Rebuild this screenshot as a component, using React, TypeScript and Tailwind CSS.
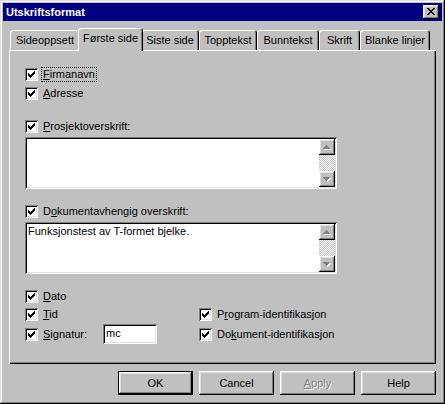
import React from 'react';

const raised =
  'shadow-[inset_-1px_-1px_0_#000,inset_1px_1px_0_#fff,inset_-2px_-2px_0_#808080,inset_2px_2px_0_#dfdfdf]';
const sunken =
  'shadow-[inset_1px_1px_0_#808080,inset_-1px_-1px_0_#fff,inset_2px_2px_0_#000,inset_-2px_-2px_0_#dfdfdf]';

const CheckMark = () => (
  <svg width="7" height="7" viewBox="0 0 7 7" shapeRendering="crispEdges">
    <path
      fill="#000"
      d="M6 0h1v1h-1z M5 1h2v1h-2z M0 2h1v1h-1z M4 2h3v1h-3z M0 3h2v1h-2z M3 3h3v1h-3z M0 4h5v1h-5z M1 5h3v1h-3z M2 6h1v1h-1z"
    />
  </svg>
);

const CloseGlyph = () => (
  <svg width="8" height="7" viewBox="0 0 8 7" shapeRendering="crispEdges">
    <path
      fill="#000"
      d="M0 0h2v1h-2z M6 0h2v1h-2z M1 1h2v1h-2z M5 1h2v1h-2z M2 2h4v1h-4z M3 3h2v1h-2z M2 4h4v1h-4z M1 5h2v1h-2z M5 5h2v1h-2z M0 6h2v1h-2z M6 6h2v1h-2z"
    />
  </svg>
);

// disabled arrow: grey triangle with a white copy one pixel down-right
const Arrow = ({ down }: { down?: boolean }) => {
  const d = down
    ? 'M4 6h7v1h-7z M5 7h5v1h-5z M6 8h3v1h-3z M7 9h1v1h-1z'
    : 'M7 6h1v1h-1z M6 7h3v1h-3z M5 8h5v1h-5z M4 9h7v1h-7z';
  return (
    <svg width="16" height="16" viewBox="0 0 16 16" shapeRendering="crispEdges">
      <path fill="#fff" d={d} transform="translate(1 1)" />
      <path fill="#808080" d={d} />
    </svg>
  );
};

const Checkbox = () => (
  <div className={`w-[13px] h-[13px] bg-white flex items-center justify-center shrink-0 ${sunken}`}>
    <CheckMark />
  </div>
);

const CheckRow = ({
  before = '',
  letter,
  after,
  focused,
}: {
  before?: string;
  letter: string;
  after: string;
  focused?: boolean;
}) => (
  <div className="flex items-center h-[13px]">
    <Checkbox />
    <span
      className={`ml-[4px] px-[1px] leading-[13px] whitespace-nowrap ${
        focused ? 'outline outline-1 outline-dotted outline-black' : ''
      }`}
    >
      {before}
      <u>{letter}</u>
      {after}
    </span>
  </div>
);

const TextBox = ({ text }: { text?: string }) => (
  <div className={`w-[312px] h-[52px] bg-white flex p-[2px] ${sunken}`}>
    <div className="flex-1 pl-[1px] pt-[1px] leading-[13px]">{text}</div>
    <div className="w-[16px] flex flex-col">
      <div className={`h-[16px] bg-[#c0c0c0] ${raised}`}>
        <Arrow />
      </div>
      <div className="flex-1 bg-[conic-gradient(#fff_25%,#c0c0c0_0_50%,#fff_0_75%,#c0c0c0_0)] bg-[length:2px_2px]" />
      <div className={`h-[16px] bg-[#c0c0c0] ${raised}`}>
        <Arrow down />
      </div>
    </div>
  </div>
);

const tabs = [
  { label: 'Sideoppsett', w: 'w-[70px]' },
  { label: 'Første side', w: 'w-[65px]', active: true },
  { label: 'Siste side', w: 'w-[58px]' },
  { label: 'Topptekst', w: 'w-[58px]' },
  { label: 'Bunntekst', w: 'w-[62px]' },
  { label: 'Skrift', w: 'w-[41px]' },
  { label: 'Blanke linjer', w: 'w-[70px]' },
];

const Button = ({
  children,
  isDefault,
  disabled,
}: {
  children: React.ReactNode;
  isDefault?: boolean;
  disabled?: boolean;
}) => (
  <div
    className={`w-[75px] h-[24px] flex items-center justify-center bg-[#c0c0c0] ${
      isDefault
        ? 'shadow-[inset_0_0_0_1px_#000,inset_-2px_-2px_0_#000,inset_2px_2px_0_#fff,inset_-3px_-3px_0_#808080,inset_3px_3px_0_#dfdfdf]'
        : raised
    } ${disabled ? 'text-[#808080] [text-shadow:1px_1px_0_#fff]' : ''}`}
  >
    {children}
  </div>
);

export default function App() {
  return (
    <div
      className="w-[445px] h-[404px] bg-[#c0c0c0] p-[3px] flex flex-col text-[11px] text-black font-[Liberation_Sans,Arial,sans-serif] shadow-[inset_-1px_-1px_0_#000,inset_1px_1px_0_#dfdfdf,inset_-2px_-2px_0_#808080,inset_2px_2px_0_#fff]"
    >
      {/* title bar */}
      <div className="h-[18px] bg-[#000080] flex items-center justify-between pl-[3px] pr-[3px]">
        <span className="text-white font-bold leading-[18px]">Utskriftsformat</span>
        <div className={`w-[16px] h-[14px] bg-[#c0c0c0] pl-[4px] pt-[3px] ${raised}`}>
          <CloseGlyph />
        </div>
      </div>

      <div className="px-[6px] pt-[7px] flex flex-col">
        {/* tabs */}
        <div className="flex items-end h-[22px] pl-[1px]">
          {tabs.map((t) =>
            t.active ? (
              <div
                key={t.label}
                className={`${t.w} h-[23px] -mb-[1px] -mx-[2px] relative z-10 bg-[#c0c0c0] rounded-t-[3px] flex items-center justify-center pb-[2px] whitespace-nowrap shadow-[inset_1px_1px_0_#fff,inset_-1px_0_0_#000,inset_-2px_0_0_#808080]`}
              >
                {t.label}
              </div>
            ) : (
              <div
                key={t.label}
                className={`${t.w} h-[20px] bg-[#c0c0c0] rounded-t-[3px] flex items-center justify-center whitespace-nowrap shadow-[inset_1px_1px_0_#fff,inset_-1px_0_0_#000,inset_-2px_0_0_#808080]`}
              >
                {t.label}
              </div>
            )
          )}
        </div>

        {/* tab page */}
        <div className="h-[314px] pl-[16px] pt-[18px] flex flex-col shadow-[inset_1px_1px_0_#fff,inset_-1px_-1px_0_#000,inset_-2px_-2px_0_#808080]">
          <CheckRow letter="F" after="irmanavn" focused />
          <div className="mt-[6px]">
            <CheckRow letter="A" after="dresse" />
          </div>
          <div className="mt-[20px]">
            <CheckRow letter="P" after="rosjektoverskrift:" />
          </div>
          <div className="mt-[4px]">
            <TextBox />
          </div>
          <div className="mt-[16px]">
            <CheckRow before="D" letter="o" after="kumentavhengig overskrift:" />
          </div>
          <div className="mt-[4px]">
            <TextBox text="Funksjonstest av T-formet bjelke." />
          </div>
          <div className="mt-[16px]">
            <CheckRow letter="D" after="ato" />
          </div>
          <div className="mt-[5px] flex">
            <div className="w-[174px]">
              <CheckRow letter="T" after="id" />
            </div>
            <CheckRow before="P" letter="r" after="ogram-identifikasjon" />
          </div>
          <div className="mt-[3px] flex items-center h-[20px]">
            <div className="w-[174px] flex items-center">
              <div className="w-[78px]">
                <CheckRow letter="S" after="ignatur:" />
              </div>
              <div className={`w-[54px] h-[20px] bg-white pl-[3px] pt-[3px] leading-[13px] ${sunken}`}>mc</div>
            </div>
            <CheckRow before="Do" letter="k" after="ument-identifikasjon" />
          </div>
        </div>

        {/* buttons */}
        <div className="mt-[7px] flex justify-end gap-[6px]">
          <Button isDefault>OK</Button>
          <Button>Cancel</Button>
          <Button disabled>
            <span>
              <u>A</u>pply
            </span>
          </Button>
          <Button>Help</Button>
        </div>
      </div>
    </div>
  );
}
